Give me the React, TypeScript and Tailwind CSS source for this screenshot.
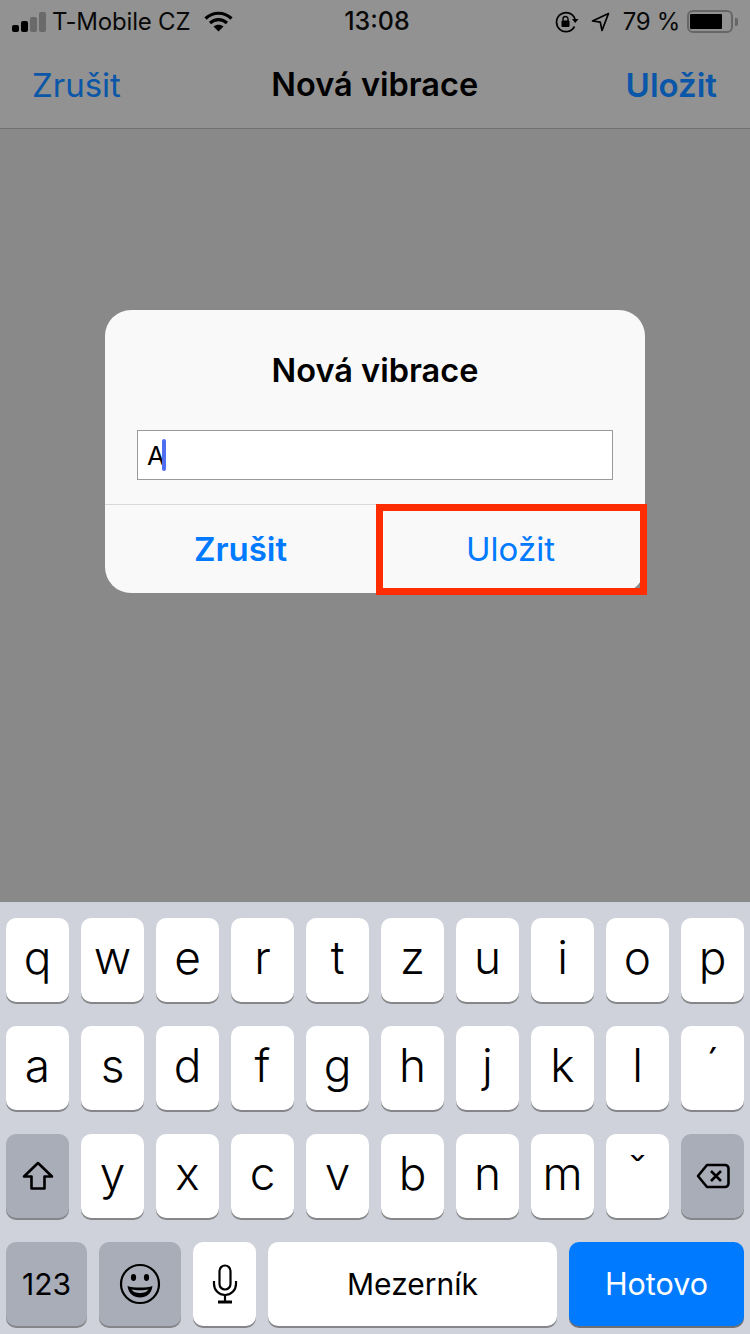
import React from "react";

const sans = "font-['Inter','Liberation_Sans',sans-serif]";
const keyFont = "font-['Inter','Liberation_Sans',sans-serif] font-light";

const whiteKey = "bg-white shadow-[0_2px_0_#85868a]";
const grayKey = "bg-[#a9adb8] shadow-[0_2px_0_#85868a]";

const Key: React.FC<{ label: string }> = ({ label }) => (
  <div
    className={`flex h-[84px] w-[63px] justify-center rounded-[10px] ${whiteKey} ${keyFont} text-[46px] leading-[78px] text-black`}
  >
    {label}
  </div>
);

const SpecialKey: React.FC<{ className: string; children: React.ReactNode }> = ({ className, children }) => (
  <div className={`flex h-[84px] items-center justify-center rounded-[10px] ${className}`}>{children}</div>
);

const StatusBar: React.FC = () => (
  <div className={`flex h-[43px] items-center pl-[12px] pr-[12px] text-[24px] tracking-[-0.2px] text-[#0a0a0a] ${sans}`}>
    <div className="flex w-[330px] items-center">
      <div className="flex items-end gap-[2px]">
        <span className="h-[7px] w-[7px] rounded-[2px] bg-black" />
        <span className="h-[11px] w-[7px] rounded-[2px] bg-black" />
        <span className="h-[15px] w-[7px] rounded-[2px] bg-[#6a6a6a]" />
        <span className="h-[20px] w-[7px] rounded-[2px] bg-[#6a6a6a]" />
      </div>
      <span className="ml-[6px] whitespace-nowrap">T-Mobile CZ</span>
      <svg className="ml-[14px]" width="29" height="21" viewBox="0 0 29 21" fill="none">
        <path d="M1.5 7.5 C9 0.5 20 0.5 27.5 7.5" stroke="#000" strokeWidth="3.2" />
        <path d="M6 12 C11 7.5 18 7.5 23 12" stroke="#000" strokeWidth="3.2" />
        <path d="M14.5 20.5 L9.5 15.5 C12.5 13 16.5 13 19.5 15.5 Z" fill="#000" />
      </svg>
    </div>
    <span className="w-[70px] text-center text-[25px] font-medium tracking-normal">13:08</span>
    <div className="ml-auto flex items-center">
      <svg width="24" height="22" viewBox="0 0 24 22" fill="none">
        <path d="M19.5 15.5 A9.5 9.5 0 1 1 20 8" stroke="#000" strokeWidth="1.7" />
        <path d="M17 8 L23.5 8 L20.2 12 Z" fill="#000" />
        <rect x="6.5" y="9.5" width="8" height="6.5" rx="1" fill="#000" />
        <path d="M8 10 V8 a2.5 2.5 0 0 1 5 0 V10" stroke="#000" strokeWidth="1.4" />
      </svg>
      <svg className="ml-[12px]" width="19" height="20" viewBox="0 0 19 20" fill="none">
        <path d="M17.5 1.5 L1.5 9 L9.3 10.2 L11 18.5 Z" stroke="#000" strokeWidth="1.7" strokeLinejoin="round" />
      </svg>
      <span className="ml-[13px] whitespace-nowrap tracking-[-0.3px]">79 %</span>
      <div className="ml-[7px] flex items-center">
        <div className="flex h-[23px] w-[46px] items-center rounded-[6px] border-[2px] border-[#666666] px-[1px]">
          <div className="h-[15px] w-[32px] rounded-[1px] bg-black" />
        </div>
        <div className="ml-[2px] h-[8px] w-[3px] rounded-r-[2px] bg-[#666666]" />
      </div>
    </div>
  </div>
);

const App: React.FC = () => {
  return (
    <div className={`flex h-[1334px] w-[750px] flex-col overflow-hidden bg-[#898989] ${sans}`}>
      <div className="h-[129px] border-b border-[#717171] bg-[#929292]">
        <StatusBar />
        <div className="flex h-[85px] items-center justify-between px-[32px] text-[33px]">
          <span className="text-[#0a56a8]">Zrušit</span>
          <span className="pl-[3px] text-[32.5px] font-semibold text-black">Nová vibrace</span>
          <span className="pr-px font-semibold text-[#0a56a8]">Uložit</span>
        </div>
      </div>

      <div className="flex-1 pl-[105px] pt-[181px]">
        <div className="relative h-[283px] w-[540px] rounded-[26px] bg-[#f9f9f9]">
          <div className="flex h-[120px] items-start justify-center pt-[39px] text-[32.5px] leading-[44px] font-semibold text-black">
            Nová vibrace
          </div>
          <div className="mx-[32px] flex h-[50px] items-center border border-[#9a9a9a] bg-white pl-[9px] text-[26px] text-black">
            <span className="-mr-[3px]">A</span>
            <span className="h-[32px] w-[4px] rounded-[2px] bg-[#4f6ff0]" />
          </div>
          <div className="mt-[24px] flex h-[89px] border-t border-[#d8d8d8] pt-[2px] text-[33px] text-[#007aff]">
            <div className="flex w-[271px] items-center justify-center font-semibold">Zrušit</div>
            <div className="flex flex-1 items-center justify-center">Uložit</div>
          </div>
          <div className="absolute left-[271px] top-[194px] h-[91px] w-[271px] border-[7px] border-[#ff2d00]" />
        </div>
      </div>

      <div className="flex h-[432px] flex-col gap-[24px] bg-[#cfd2da] pl-[6px] pt-[16px]">
        <div className="flex gap-[12px]">
          {["q", "w", "e", "r", "t", "z", "u", "i", "o", "p"].map((k) => (
            <Key key={k} label={k} />
          ))}
        </div>
        <div className="flex gap-[12px]">
          {["a", "s", "d", "f", "g", "h", "j", "k", "l", "´"].map((k) => (
            <Key key={k} label={k} />
          ))}
        </div>
        <div className="flex gap-[12px]">
          <SpecialKey className={`w-[63px] ${grayKey}`}>
            <svg width="32" height="30" viewBox="0 0 32 30" fill="none">
              <path d="M16 2 L30 15.5 H22.5 V27.5 H9.5 V15.5 H2 Z" stroke="#000" strokeWidth="2.6" strokeLinejoin="round" />
            </svg>
          </SpecialKey>
          {["y", "x", "c", "v", "b", "n", "m", "ˇ"].map((k) => (
            <Key key={k} label={k} />
          ))}
          <SpecialKey className={`w-[63px] ${grayKey}`}>
            <svg width="34" height="26" viewBox="0 0 34 26" fill="none">
              <path d="M11 2 H29 a3.5 3.5 0 0 1 3.5 3.5 V20.5 a3.5 3.5 0 0 1 -3.5 3.5 H11 L2 13 Z" stroke="#000" strokeWidth="2.6" strokeLinejoin="round" />
              <path d="M15 8 L25 18 M25 8 L15 18" stroke="#000" strokeWidth="2.6" />
            </svg>
          </SpecialKey>
        </div>
        <div className="flex gap-[12px]">
          <SpecialKey className={`w-[81px] text-[30px] text-black ${grayKey}`}>123</SpecialKey>
          <SpecialKey className={`w-[82px] ${grayKey}`}>
            <svg width="42" height="42" viewBox="0 0 42 42" fill="none">
              <circle cx="21" cy="21" r="19" stroke="#000" strokeWidth="2.2" />
              <ellipse cx="14.5" cy="14.5" rx="2.6" ry="3.4" fill="#000" />
              <ellipse cx="27.5" cy="14.5" rx="2.6" ry="3.4" fill="#000" />
              <path d="M8.5 23 C14 25 28 25 33.5 23 C32.5 31 27 34.5 21 34.5 C15 34.5 9.5 31 8.5 23 Z" fill="#000" />
              <path d="M12.5 26.5 C17 27.5 25 27.5 29.5 26.5 C28 29 25 30 21 30 C17 30 14 29 12.5 26.5 Z" fill="#a9adb8" />
            </svg>
          </SpecialKey>
          <SpecialKey className={`w-[63px] ${whiteKey}`}>
            <svg width="26" height="40" viewBox="0 0 26 40" fill="none">
              <rect x="7.5" y="1.5" width="11" height="24" rx="5.5" stroke="#000" strokeWidth="2.2" />
              <path d="M2 17 V20 a11 11 0 0 0 22 0 V17" stroke="#000" strokeWidth="2.2" />
              <path d="M13 31 V37" stroke="#000" strokeWidth="2.2" />
              <path d="M6 38 H20" stroke="#000" strokeWidth="3" />
            </svg>
          </SpecialKey>
          <SpecialKey className={`w-[289px] text-[30px] text-black ${whiteKey}`}>Mezerník</SpecialKey>
          <SpecialKey className="w-[175px] bg-[#007aff] text-[30.5px] text-white shadow-[0_2px_0_#6f7074]">Hotovo</SpecialKey>
        </div>
      </div>
    </div>
  );
};

export default App;
